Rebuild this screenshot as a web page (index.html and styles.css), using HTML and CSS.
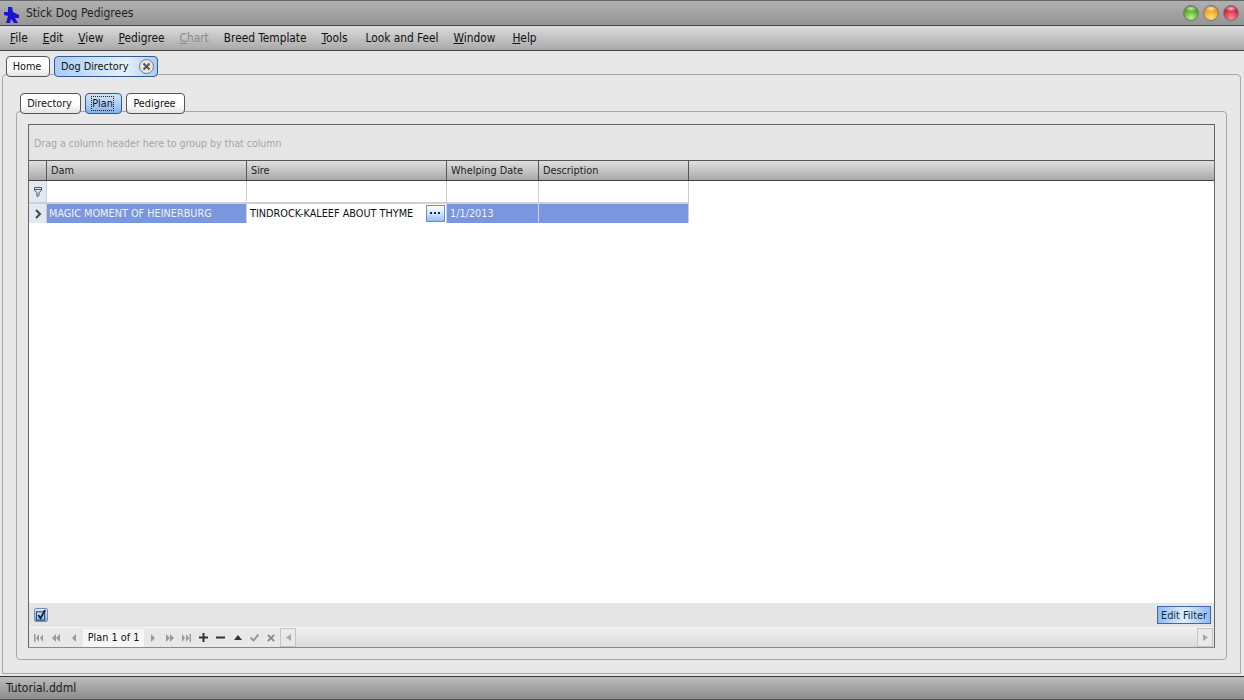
FILE: index.html
```html
<!DOCTYPE html>
<html>
<head>
	<title>Stick Dog Pedigrees</title>
	<link rel="stylesheet" href="styles.css">
</head>
<body>
<div class="app">
	<div class="titlebar">
		<svg class="logo" width="16" height="16" viewBox="0 0 16 16"><path d="M4 0 H8 L9 5 L15 8 V11 H11 L14 16 H10 L7 12 L6 16 H2 L4 9 L0 8 V5 L4 5 Z" fill="#1a14d8"/></svg>
		<span class="title">Stick Dog Pedigrees</span>
		<span class="winbtns">
			<i class="winbtn green"></i>
			<i class="winbtn orange"></i>
			<i class="winbtn red"></i>
		</span>
	</div>

	<div class="menubar">
		<span class="menu"><u>F</u>ile</span>
		<span class="menu"><u>E</u>dit</span>
		<span class="menu"><u>V</u>iew</span>
		<span class="menu"><u>P</u>edigree</span>
		<span class="menu disabled"><u>C</u>hart</span>
		<span class="menu">Breed Template</span>
		<span class="menu menu-tools"><u>T</u>ools</span>
		<span class="menu">Look and Feel</span>
		<span class="menu menu-window"><u>W</u>indow</span>
		<span class="menu"><u>H</u>elp</span>
	</div>

	<div class="workspace">
		<div class="tabs outer-tabs">
			<span class="tab home-tab">Home</span>
			<span class="tab active dir-tab">Dog Directory
				<span class="close-btn">
					<svg width="9" height="9" viewBox="0 0 9 9"><path d="M1.5 1.5 L7.5 7.5 M7.5 1.5 L1.5 7.5" stroke="#555" stroke-width="2"/></svg>
				</span>
			</span>
		</div>
		<div class="panel outer-panel">
			<div class="tabs inner-tabs">
				<span class="tab directory-tab">Directory</span>
				<span class="tab active plan-tab"><span class="focus">Plan</span></span>
				<span class="tab pedigree-tab">Pedigree</span>
			</div>
			<div class="panel inner-panel">
				<div class="gridbox">
					<div class="group-panel">Drag a column header here to group by that column</div>

					<div class="row header-row">
						<div class="hcell"></div>
						<div class="hcell">Dam</div>
						<div class="hcell">Sire</div>
						<div class="hcell">Whelping Date</div>
						<div class="hcell">Description</div>
						<div class="hcell last"></div>
					</div>

					<div class="row filter-row">
						<div class="indicator">
							<svg width="8" height="10" viewBox="0 0 8 10"><path d="M0.5 0.5 H7.5 V3.5 L5 5.5 V8.5 L3 9.5 V5.5 L0.5 3.5 Z M0.5 2.5 H7.5" fill="none" stroke="#4d5a6b"/></svg>
						</div>
						<div class="cell"></div>
						<div class="cell"></div>
						<div class="cell"></div>
						<div class="cell"></div>
					</div>

					<div class="row data-row">
						<div class="indicator">
							<svg width="8" height="10" viewBox="0 0 8 10"><path d="M2 1 L6 5 L2 9" fill="none" stroke="#444" stroke-width="2"/></svg>
						</div>
						<div class="cell selected dam-cell">MAGIC MOMENT OF HEINERBURG</div>
						<div class="cell editing">TINDROCK-KALEEF ABOUT THYME
							<span class="dots-btn">
								<svg width="11" height="3" viewBox="0 0 11 3"><path d="M0 0h2v2H0z M4 0h2v2H4z M8 0h2v2H8z" fill="#1c2a4a"/></svg>
							</span>
						</div>
						<div class="cell selected">1/1/2013</div>
						<div class="cell selected"></div>
					</div>

					<div class="grid-space"></div>

					<div class="filter-bar">
						<span class="check-btn">
							<svg width="13" height="13" viewBox="0 0 13 13"><rect x="1.5" y="2.5" width="9" height="9" fill="none" stroke="#22304f"/><path d="M3.5 6 L6 9.5 L11 0.5" fill="none" stroke="#16213d" stroke-width="2"/></svg>
						</span>
						<span class="edit-filter">Edit Filter</span>
					</div>

					<div class="nav-bar">
						<div class="nav-buttons">
							<svg class="nav-icon" width="9" height="8" viewBox="0 0 9 8"><path d="M0 0h1.500v8H0z M5 0v8L2 4z M9 0v8L6 4z" fill="#9a9a9a"/></svg>
							<svg class="nav-icon prev-many" width="8" height="8" viewBox="0 0 8 8"><path d="M4 0v8L0 4z M8 0v8L4 4z" fill="#9a9a9a"/></svg>
							<svg class="nav-icon prev-one" width="4" height="8" viewBox="0 0 4 8"><path d="M4 0v8L0 4z" fill="#9a9a9a"/></svg>
							<span class="nav-text">Plan 1 of 1</span>
							<svg class="nav-icon next-one" width="4" height="8" viewBox="0 0 4 8"><path d="M0 0v8l4-4z" fill="#9a9a9a"/></svg>
							<svg class="nav-icon next-many" width="8" height="8" viewBox="0 0 8 8"><path d="M0 0v8l4-4z M4 0v8l4-4z" fill="#9a9a9a"/></svg>
							<svg class="nav-icon next-last" width="9" height="8" viewBox="0 0 9 8"><path d="M0 0v8l3-4z M4 0v8l3-4z M7.500 0H9v8H7.500z" fill="#9a9a9a"/></svg>
							<svg class="nav-icon edit" width="9" height="9" viewBox="0 0 9 9"><path d="M3.500 0h2v3.500H9v2H5.500V9h-2V5.500H0v-2h3.500z" fill="#333"/></svg>
							<svg class="nav-icon edit" width="9" height="9" viewBox="0 0 9 9"><path d="M0 3.500h9v2H0z" fill="#333"/></svg>
							<svg class="nav-icon edit up" width="8" height="9" viewBox="0 0 8 9"><path d="M4 2L8 7H0z" fill="#333"/></svg>
							<svg class="nav-icon edit" width="9" height="9" viewBox="0 0 9 9"><path d="M0.500 4.500L3.500 7.500L8.500 1.500" fill="none" stroke="#999" stroke-width="2"/></svg>
							<svg class="nav-icon edit" width="8" height="8" viewBox="0 0 9 9"><path d="M1 1L8 8M8 1L1 8" fill="none" stroke="#888" stroke-width="2"/></svg>
						</div>
						<div class="scrollbar">
							<span class="scroll-btn"><svg width="5" height="7" viewBox="0 0 5 7"><path d="M5 0v7L0 3.500z" fill="#aaa"/></svg></span>
							<span class="scroll-track"></span>
							<span class="scroll-btn"><svg width="5" height="7" viewBox="0 0 5 7"><path d="M0 0v7l5-3.500z" fill="#aaa"/></svg></span>
						</div>
					</div>
				</div>
			</div>
		</div>
	</div>

	<div class="statusbar">Tutorial.ddml</div>
</div>
</body>
</html>
```

FILE: styles.css
```css
/* Stick Dog Pedigrees main window */

html, body { margin: 0; padding: 0; }
body { font-family: "DejaVu Sans Condensed", "DejaVu Sans", sans-serif; font-stretch: condensed; font-size: 10.8px; color: #111; background: #e8e8e8; }
svg { display: block; }

.app { width: 1244px; height: 700px; display: flex; flex-direction: column; overflow: hidden; }

/* title bar */
.titlebar { flex: none; display: flex; align-items: center; padding: 0 5px 0 4px; border-top: 1px solid #666; border-bottom: 1px solid #444; background: linear-gradient(#b0b0b0, #959595); font-size: 12px; height: 24px; }
.logo { margin-right: 6px; margin-top: 3px; }
.title { color: #1e1e1e; }
.winbtns { margin-left: auto; display: flex; gap: 4px; }
.winbtn { width: 14px; height: 14px; border-radius: 50%; border: 1px solid #777; box-sizing: content-box; }
.green { background: radial-gradient(ellipse 6px 3px at 50% 18%, rgba(255,255,255,.75), transparent), radial-gradient(circle at 50% 85%, #c0f090, #55a828 60%, #2f7a18); }
.orange { background: radial-gradient(ellipse 6px 3px at 50% 18%, rgba(255,255,255,.75), transparent), radial-gradient(circle at 50% 85%, #ffe080, #f0a020 60%, #b86a10); }
.red { background: radial-gradient(ellipse 6px 3px at 50% 18%, rgba(255,255,255,.75), transparent), radial-gradient(circle at 50% 85%, #f89098, #d02840 60%, #96182c); }

/* menu */
.menubar { height: 24px; flex: none; display: flex; align-items: center; gap: 15px; padding-left: 10px; border-bottom: 1px solid #444; background: linear-gradient(#dcdcdc, #a9a9a9); font-size: 11.8px; }
.menu { color: #111; }
.menu.disabled { color: #8a8a8a; }
.menu-tools { margin-right: 3px; }
.menu-window { margin-right: 2px; }

/* tabs */
.workspace { flex: 1; min-height: 0; display: flex; flex-direction: column; padding: 5px 3px 2px 2px; }
.tabs { display: flex; gap: 4px; position: relative; z-index: 1; flex: none; height: 21px; margin-bottom: -3px; }
.outer-tabs { padding-left: 4px; }
.inner-tabs { padding-left: 4px; }
.tab { box-sizing: border-box; height: 21px; display: flex; align-items: center; justify-content: center; padding-right: 2px; border: 1px solid #555; border-radius: 4px; background: linear-gradient(#fff, #fff 55%, #e2e2e2); }
.tab.active { border-color: #345a96; background: linear-gradient(#cfe4fb, #b4d4f6 45%, #7fb2ee); }
.home-tab { width: 44px; }
.tab.dir-tab { width: 104px; justify-content: flex-start; padding: 0 0 0 6px; background: linear-gradient(90deg, #a9cdf5, #e4f0fc 70%, #a9cdf5); }
.close-btn { width: 15px; height: 15px; margin-left: auto; margin-right: 3px; border-radius: 50%; border: 1px solid #777; background: #e6e6e6; display: flex; align-items: center; justify-content: center; box-sizing: border-box; }
.directory-tab { width: 61px; }
.plan-tab { width: 37px; }
.pedigree-tab { width: 59px; }
.focus { outline: 1px dotted #223; outline-offset: 0; line-height: 13px; }

.panel { border: 1px solid #a8a8a8; border-radius: 4px; background: #e8e8e8; }
.outer-panel { flex: 1; min-height: 0; display: flex; flex-direction: column; padding: 18px 13px 13px 13px; border-bottom-left-radius: 0; border-bottom-right-radius: 0; }
.inner-panel { flex: 1; min-height: 0; display: flex; padding: 12px 11px 11px 11px; }

/* grid */
.gridbox { flex: 1; min-width: 0; display: flex; flex-direction: column; border: 1px solid #666; border-bottom-color: #888; background: #fff; }
.group-panel { height: 35px; flex: none; box-sizing: border-box; padding: 12px 0 0 5px; background: #e5e5e5; color: #a5a5a5; font-size: 10.5px; }
.row { display: grid; grid-template-columns: 18px 200px 200px 92px 150px 1fr; flex: none; }
.header-row { border-top: 1px solid #555; border-bottom: 1px solid #444; box-sizing: border-box; height: 21px; background: linear-gradient(#e0e0e0, #a8a8a8); }
.hcell { border-right: 1px solid #555; padding-left: 4px; line-height: 19px; color: #222; }
.hcell.last { border-right: 0; }
.filter-row { height: 22px; }
.data-row { height: 20px; }
.indicator { background: #e3e9f2; border-right: 1px solid #ccc; border-bottom: 1px solid #cfcfcf; display: flex; align-items: center; justify-content: center; }
.cell { border-right: 1px solid #d0d0d0; border-bottom: 1px solid #d0d0d0; padding-left: 3px; line-height: 20px; white-space: nowrap; }
.filter-row .cell { padding: 0; }
.data-row .indicator, .data-row .cell { border-bottom: 0; }
.data-row .indicator { border-top: 1px solid #cfcfcf; }
.data-row .cell { border-top: 1px solid #c8d2e8; line-height: 19px; }
.selected { background: #7a96de; color: #eef2fb; }
.dam-cell { padding-left: 2px; }
.cell.editing { background: #fff; color: #111; display: flex; align-items: center; justify-content: space-between; padding-right: 1px; }
.dots-btn { width: 19px; height: 17px; flex: none; box-sizing: border-box; border: 1px solid #6d8fbd; background: linear-gradient(#fff, #cfe3fa 50%, #8fbdf0); display: flex; align-items: center; justify-content: center; }
.grid-space { flex: 1; background: #fff; }

.filter-bar { height: 24px; flex: none; display: flex; align-items: center; justify-content: space-between; padding: 0 3px 0 5px; background: #e5e5e5; }
.check-btn { width: 14px; height: 14px; box-sizing: border-box; border: 1px solid #6f8fb8; border-radius: 2px; background: linear-gradient(#d8e8fb, #8ebbef); display: flex; align-items: center; justify-content: center; }
.edit-filter { width: 54px; height: 18px; box-sizing: border-box; border: 1px solid #3f6aa8; background: linear-gradient(90deg, #8dbcf0, #e0eefc 50%, #8dbcf0); display: flex; align-items: center; justify-content: center; color: #1a2a44; }

.nav-bar { height: 19px; flex: none; display: flex; align-items: stretch; background: #e8e8e8; border-top: 1px solid #f4f4f4; }
.nav-buttons { width: 251px; flex: none; display: flex; align-items: center; padding-left: 5px; box-sizing: border-box; }
.nav-icon { flex: none; }
.prev-many { margin-left: 9px; }
.prev-one { margin-left: 12px; }
.nav-text { margin-left: 7px; width: 61px; text-align: center; line-height: 18px; background: #f6f6f6; color: #111; }
.next-one { margin-left: 7px; }
.next-many { margin-left: 11px; }
.next-last { margin-left: 8px; }
.edit { margin-left: 8px; }
.up { margin-left: 9px; }
.scrollbar { flex: 1; display: flex; min-width: 0; padding-right: 1px; }
.scroll-btn { width: 16px; flex: none; box-sizing: border-box; border: 1px solid #c4c4c4; background: #e9e9e9; display: flex; align-items: center; justify-content: center; }
.scroll-track { flex: 1; background: linear-gradient(#f0f0f0, #dcdcdc); }

/* status */
.statusbar { height: 24px; flex: none; box-sizing: border-box; border-top: 1px solid #333; border-bottom: 1px solid #555; padding-left: 6px; line-height: 22px; font-size: 12px; color: #1a1a1a; background: linear-gradient(#bcbcbc, #8c8c8c); }
```
